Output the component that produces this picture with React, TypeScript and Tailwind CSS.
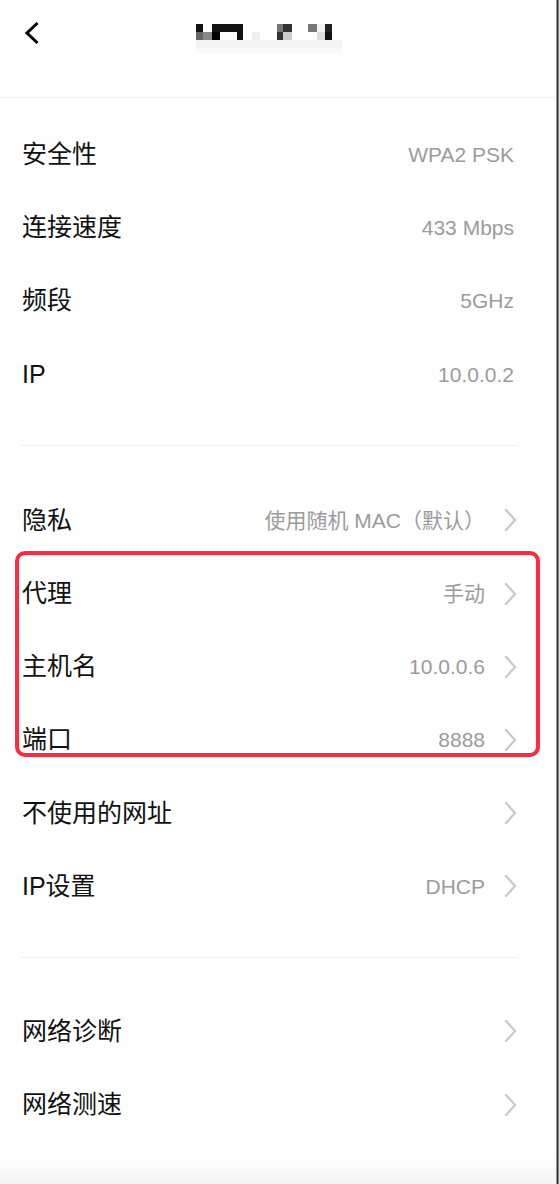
import React from "react";

const font = { fontFamily: '"Liberation Sans", "Noto Sans CJK SC", sans-serif' };

function Chevron() {
  return (
    <svg width="13" height="22" viewBox="0 0 13 22" className="shrink-0">
      <path d="M2 1 L11 11 L2 21" fill="none" stroke="#c8c8c8" strokeWidth="2.2" strokeLinecap="square" />
    </svg>
  );
}

function Row({ label, value, arrow }: { label: string; value?: string; arrow?: boolean }) {
  return (
    <div
      className={
        arrow
          ? "flex h-[73.2px] items-center justify-between pl-[22px] pr-[39px]"
          : "flex h-[73.2px] items-center justify-between pl-[22px] pr-[42px]"
      }
    >
      <span className="text-[25px] text-[#111111] leading-none">{label}</span>
      <div className="flex items-center gap-[19px]">
        {value && <span className="text-[21px] text-[#9b9b9b] leading-none">{value}</span>}
        {arrow && <Chevron />}
      </div>
    </div>
  );
}

function Mosaic() {
  const cells: [number, number, number, number, string][] = [
    [0, 0, 7, 8, "#111"],
    [16, 0, 31, 8, "#111"],
    [0, 8, 7, 8, "#666"],
    [7, 8, 9, 8, "#888"],
    [16, 8, 8, 8, "#000"],
    [41, 8, 6, 8, "#111"],
    [56, 8, 8, 8, "#eee"],
    [81, 0, 6, 8, "#777"],
    [87, 0, 9, 8, "#333"],
    [81, 8, 6, 8, "#333"],
    [87, 8, 9, 8, "#ccc"],
    [112, 0, 9, 8, "#777"],
    [121, 0, 8, 8, "#f2f2f2"],
    [129, 0, 7, 8, "#222"],
    [121, 8, 8, 8, "#ddd"],
    [129, 8, 7, 8, "#111"],
    [0, 16, 146, 8, "#f3f3f3"],
    [0, 24, 146, 5, "#f9f9f9"],
  ];
  return (
    <svg width="146" height="29" viewBox="0 0 146 29">
      {cells.map(([x, y, w, h, c], i) => (
        <rect key={i} x={x} y={y} width={w} height={h} fill={c} />
      ))}
    </svg>
  );
}

export default function App() {
  return (
    <div className="relative w-[560px] h-[1184px] overflow-hidden bg-white" style={font}>
      <div className="w-[556px]">
        <div className="relative flex h-[98px] items-start border-b border-[#eeeeee]">
          <div className="pl-[24px] pt-[21px]">
            <svg width="16" height="24" viewBox="0 0 16 24">
              <path d="M13.5 2 L3 12 L13.5 22" fill="none" stroke="#000" strokeWidth="3" />
            </svg>
          </div>
          <div className="absolute left-[196px] top-[24px]">
            <Mosaic />
          </div>
        </div>

        <div className="pt-[20px]">
          <Row label="安全性" value="WPA2 PSK" />
          <Row label="连接速度" value="433 Mbps" />
          <Row label="频段" value="5GHz" />
          <Row label="IP" value="10.0.0.2" />
        </div>

        <div className="ml-[21px] mr-[38px] mt-[34px] h-px bg-[#eeeeee]" />

        <div className="pt-[38px]">
          <Row label="隐私" value="使用随机 MAC（默认）" arrow />
          <Row label="代理" value="手动" arrow />
          <Row label="主机名" value="10.0.0.6" arrow />
          <Row label="端口" value="8888" arrow />
          <Row label="不使用的网址" arrow />
          <Row label="IP设置" value="DHCP" arrow />
        </div>

        <div className="ml-[21px] mr-[38px] mt-[34px] h-px bg-[#eeeeee]" />

        <div className="pt-[37px]">
          <Row label="网络诊断" arrow />
          <Row label="网络测速" arrow />
        </div>
      </div>

      <div className="absolute left-[15px] top-[551px] w-[525px] h-[206px] rounded-[10px] border-[4px] border-[#fe2b43]" />

      <div className="absolute bottom-0 left-0 w-[556px] h-[30px] bg-gradient-to-b from-white to-[#f4f4f4]" />

      <div className="absolute right-0 top-0 flex h-full w-[4px]">
        <div className="w-px bg-[#9a9a9a]" />
        <div className="w-px bg-[#2a2a2a]" />
        <div className="w-px bg-[#8a8a8a]" />
        <div className="w-px bg-[#e0e0e0]" />
      </div>
    </div>
  );
}
